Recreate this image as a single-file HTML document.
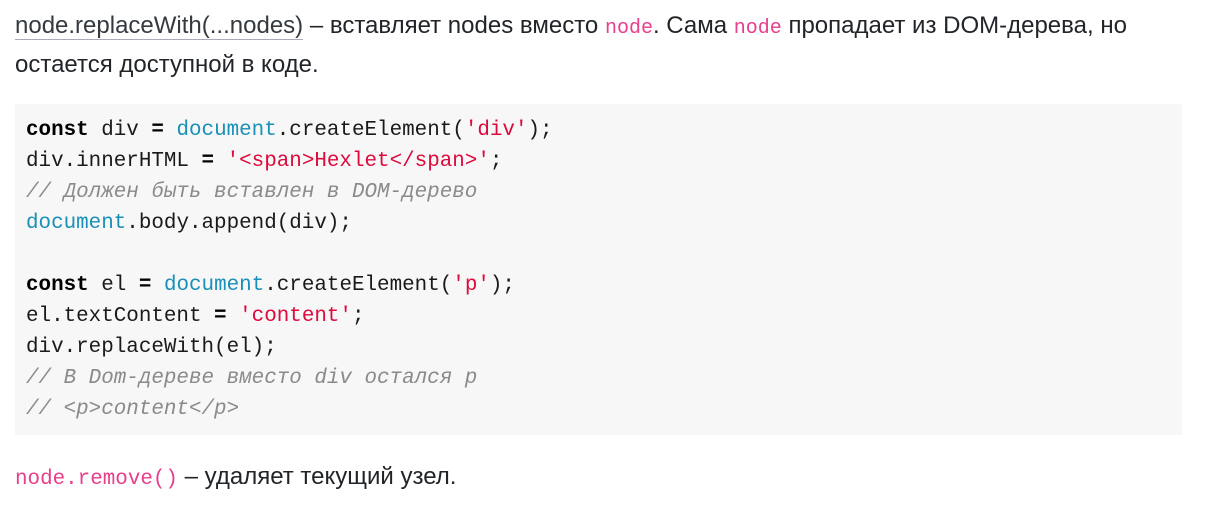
<!DOCTYPE html>
<html><head><meta charset="utf-8"><style>
body{margin:0;background:#fff;width:1221px;height:510px;overflow:hidden;font-family:"Liberation Sans",sans-serif;color:#212529;}
p{margin:0;position:absolute;left:15px;font-size:24px;line-height:36px;white-space:nowrap;}
a{color:#343a40;text-decoration:none;border-bottom:1px solid #aab;}
code{font-family:"Liberation Mono",monospace;color:#e83e8c;font-size:20px;}
pre{position:absolute;left:15px;top:104px;width:1167px;height:331px;margin:0;background:#f7f7f7;box-sizing:border-box;padding:11px 11px;font-family:"Liberation Mono",monospace;font-size:20.9px;line-height:31px;color:#1a1a1a;}
.k{font-weight:bold;color:#000}.d{color:#1990b8}.s{color:#dd0a3c}.c{color:#8a8a8a;font-style:italic}
</style></head><body>
<p style="top:8px"><a>node.replaceWith(...nodes)</a> – вставляет nodes вместо <code>node</code>. Сама <code>node</code> пропадает из DOM-дерева, но<br>остается доступной в коде.</p>
<pre><span class="k">const</span> div <span class="k">=</span> <span class="d">document</span>.createElement(<span class="s">'div'</span>);
div.innerHTML <span class="k">=</span> <span class="s">'&lt;span&gt;Hexlet&lt;/span&gt;'</span>;
<span class="c">// Должен быть вставлен в DOM-дерево</span>
<span class="d">document</span>.body.append(div);

<span class="k">const</span> el <span class="k">=</span> <span class="d">document</span>.createElement(<span class="s">'p'</span>);
el.textContent <span class="k">=</span> <span class="s">'content'</span>;
div.replaceWith(el);
<span class="c">// В Dom-дереве вместо div остался p</span>
<span class="c">// &lt;p&gt;content&lt;/p&gt;</span></pre>
<p style="top:459px"><code style="font-size:20.9px">node.remove()</code> – удаляет текущий узел.</p>
</body></html>
